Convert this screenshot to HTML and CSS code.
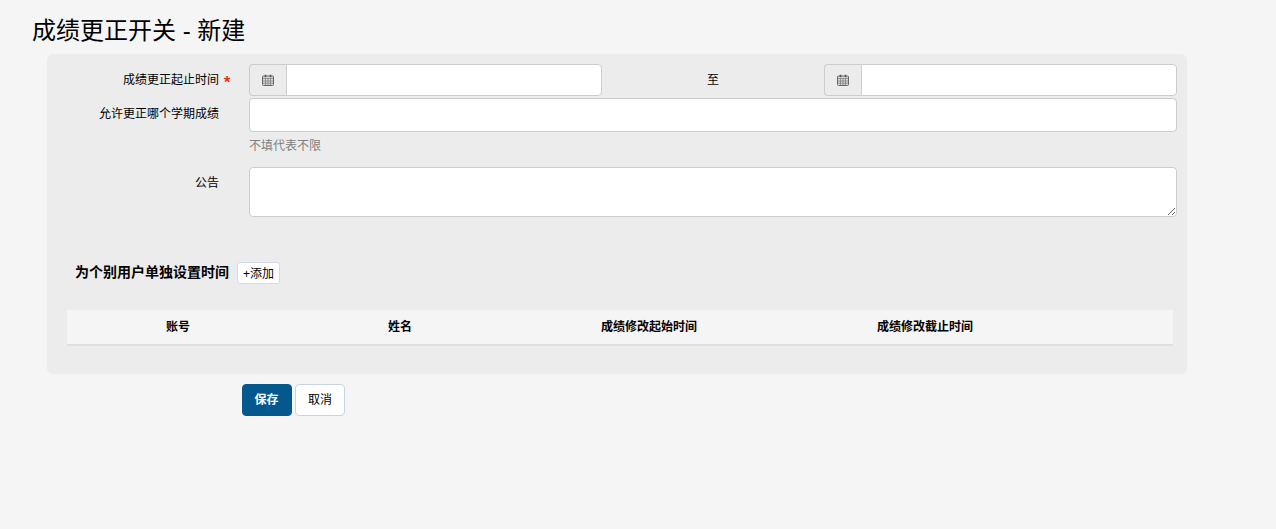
FILE: index.html
```html
<!DOCTYPE html>
<html lang="zh-CN">
<head>
<meta charset="utf-8">
<title>成绩更正开关 - 新建</title>
<link rel="stylesheet" href="styles.css">
</head>
<body>
<h1 class="title">成绩更正开关 - 新建</h1>
<form class="panel">
  <div class="row row-date">
    <label class="label">成绩更正起止时间<span class="star">*</span></label>
    <div class="date-fields">
      <div class="input-group">
        <span class="addon"><svg class="cal" viewBox="0 0 12 12" width="12" height="12"><path d="M1.5 2h9a1 1 0 0 1 1 1v7.5a1 1 0 0 1-1 1h-9a1 1 0 0 1-1-1V3a1 1 0 0 1 1-1z" fill="#dcd9d6" stroke="#666" stroke-width="1"/><path d="M1 4.5h10M1 7h10M1 9.2h10M3.5 4.5v6.5M6 4.5v6.5M8.5 4.5v6.5" stroke="#777" stroke-width=".7" fill="none"/><path d="M3.5 .8v2.4M8.5 .8v2.4" stroke="#555" stroke-width="1.5"/></svg></span>
        <input class="input input-date" type="text">
      </div>
      <span class="to">至</span>
      <div class="input-group">
        <span class="addon"><svg class="cal" viewBox="0 0 12 12" width="12" height="12"><path d="M1.5 2h9a1 1 0 0 1 1 1v7.5a1 1 0 0 1-1 1h-9a1 1 0 0 1-1-1V3a1 1 0 0 1 1-1z" fill="#dcd9d6" stroke="#666" stroke-width="1"/><path d="M1 4.5h10M1 7h10M1 9.2h10M3.5 4.5v6.5M6 4.5v6.5M8.5 4.5v6.5" stroke="#777" stroke-width=".7" fill="none"/><path d="M3.5 .8v2.4M8.5 .8v2.4" stroke="#555" stroke-width="1.5"/></svg></span>
        <input class="input input-date" type="text">
      </div>
    </div>
  </div>
  <div class="row row-term">
    <label class="label">允许更正哪个学期成绩</label>
    <div class="field">
      <input class="input input-full" type="text">
      <p class="help">不填代表不限</p>
    </div>
  </div>
  <div class="row row-notice">
    <label class="label">公告</label>
    <div class="field"><textarea class="input textarea"></textarea></div>
  </div>
  <div class="subhead">
    <strong class="subtitle">为个别用户单独设置时间</strong>
    <button class="btn-add" type="button">+添加</button>
  </div>
  <div class="table">
    <div class="th">账号</div>
    <div class="th">姓名</div>
    <div class="th">成绩修改起始时间</div>
    <div class="th">成绩修改截止时间</div>
    <div class="th"></div>
  </div>
</form>
<div class="actions">
  <button class="btn btn-primary" type="button">保存</button>
  <button class="btn btn-default" type="button">取消</button>
</div>
</body>
</html>
```
FILE: styles.css
```css
* { box-sizing: border-box; }
html, body { height: 100%; }
body {
  margin: 0;
  background: #f5f5f5;
  color: #000;
  font-family: "Liberation Sans", "Noto Sans CJK SC", sans-serif;
  font-size: 12px;
  overflow: hidden;
}
.title {
  margin: 0;
  padding: 14px 0 0 32px;
  height: 54px;
  font-size: 24px;
  line-height: 34px;
  font-weight: 400;
}
.panel {
  margin-left: 47px;
  width: 1140px;
  height: 320px;
  padding-top: 10px;
  background: #ececec;
  border-radius: 6px;
}
.row {
  display: grid;
  grid-template-columns: 172px 928px;
  column-gap: 30px;
}
.row-term { margin-top: 2px; }
.row-notice { margin-top: 12px; }
.label {
  text-align: right;
  font-size: 12px;
  line-height: 17px;
  padding-top: 8px;
  position: relative;
}
.star {
  position: absolute;
  left: 177px;
  top: 10px;
  color: #e8320f;
  font-size: 16px;
  font-weight: 700;
  line-height: 17px;
}
.date-fields {
  display: grid;
  grid-template-columns: 353px 222px 353px;
}
.input-group { display: flex; height: 32px; }
.addon {
  flex: 0 0 37px;
  display: flex;
  align-items: center;
  justify-content: center;
  background: #ececec;
  border: 1px solid #ccc;
  border-right: 0;
  border-radius: 4px 0 0 4px;
  padding-right: 1px;
}
.input {
  display: block;
  background: #fff;
  border: 1px solid #ccc;
  border-radius: 4px;
  font: inherit;
  margin: 0;
  padding: 0 8px;
  outline: none;
}
.input-date {
  flex: 1;
  min-width: 0;
  border-radius: 0 4px 4px 0;
}
.to {
  text-align: center;
  line-height: 30px;
  padding-top: 1px;
  font-size: 12px;
}
.field { min-width: 0; }
.input-full { width: 100%; height: 34px; }
.help {
  margin: 5px 0 0;
  padding-top: 1px;
  font-size: 12px;
  line-height: 17px;
  color: #808080;
}
.textarea {
  width: 100%;
  height: 50px;
  resize: vertical;
}
.subhead {
  display: flex;
  align-items: center;
  gap: 8px;
  margin: 45px 0 0 28px;
  height: 22px;
}
.subtitle {
  font-size: 14px;
  font-weight: 700;
  line-height: 20px;
  padding-bottom: 2px;
}
.btn-add {
  height: 22px;
  width: 43px;
  padding: 0 0 1px;
  background: #fff;
  border: 1px solid #d3dce6;
  border-radius: 3px;
  font: inherit;
  color: #000;
}
.table {
  display: grid;
  grid-template-columns: 222px 222px 276px 276px 110px;
  margin: 26px 0 0 20px;
  width: 1106px;
  height: 36px;
  background: #f5f5f5;
  border-bottom: 2px solid #e0e0e0;
}
.th {
  text-align: center;
  font-weight: 700;
  font-size: 12px;
  line-height: 34px;
}
.actions {
  display: flex;
  gap: 3px;
  margin: 10px 0 0 242px;
}
.btn {
  width: 50px;
  height: 32px;
  border-radius: 4px;
  font: inherit;
  padding: 0 0 3px;
}
.btn-primary {
  background: #04588e;
  border: 1px solid #04588e;
  color: #fff;
  font-weight: 700;
  padding-right: 1px;
}
.btn-default {
  background: #fff;
  border: 1px solid #c8d4e2;
  color: #000;
}
```
